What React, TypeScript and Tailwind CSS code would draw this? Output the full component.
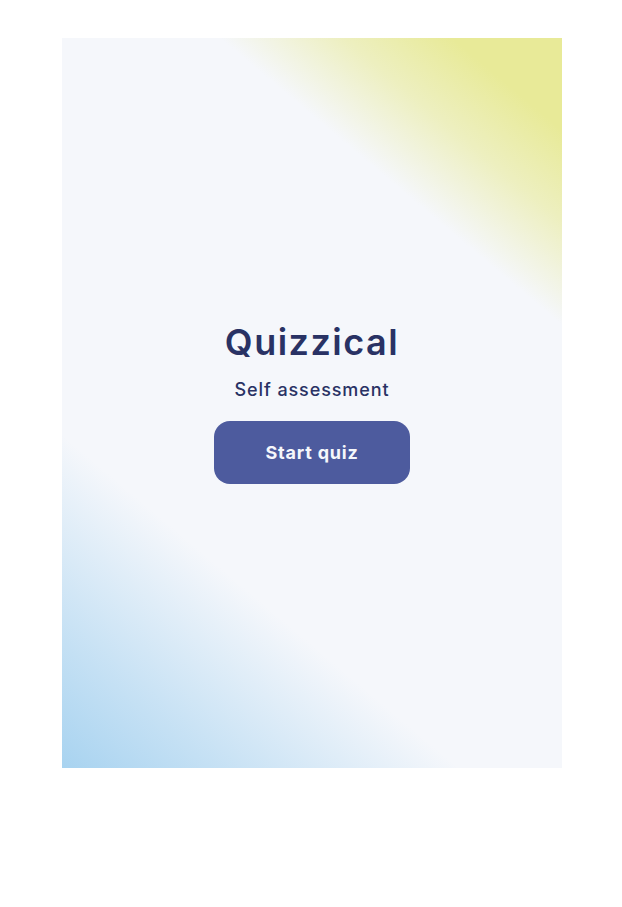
const App = (): JSX.Element => {
  return (
    <div className="min-h-screen bg-white pt-[38px]">
      <main className="ml-[62px] flex h-[730px] w-[500px] flex-col items-center justify-center bg-[#f5f7fb] bg-[linear-gradient(40deg,#a8d3f0_0%,rgba(168,211,240,0.6)_12%,rgba(245,247,251,0)_29%,rgba(245,247,251,0)_75%,rgba(232,234,152,0.6)_84%,#e8ea98_92%)] pt-[2px] font-['Inter',sans-serif] text-[#293264]">
        <h1 className="text-[36px] font-semibold leading-none tracking-[1.5px]">
          Quizzical
        </h1>
        <p className="mt-[16px] text-[18px] font-medium tracking-[0.9px]">
          Self assessment
        </p>
        <button className="mt-[18px] h-[63px] w-[196px] rounded-[16px] bg-[#4d5b9e] text-[18px] font-bold tracking-[0.8px] text-[#f5f7fb]">
          Start quiz
        </button>
      </main>
    </div>
  );
};

export default App;
